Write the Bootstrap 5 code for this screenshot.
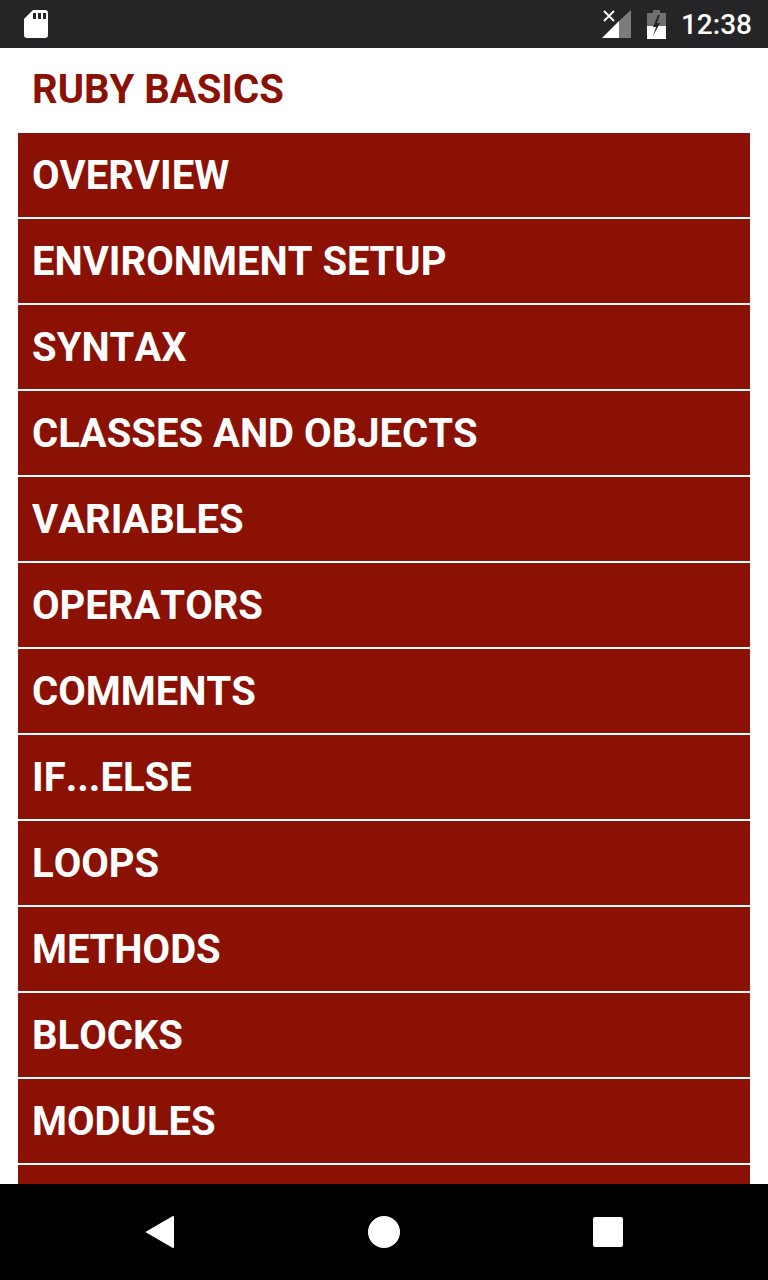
<!DOCTYPE html>
<html lang="en">
<head>
<meta charset="utf-8">
<title>Ruby Basics</title>
<link rel="stylesheet" href="https://cdn.jsdelivr.net/npm/bootstrap@5.3.0/dist/css/bootstrap.min.css">
<style>
html,body{height:1280px;overflow:hidden;background:#fff;}
body{font-family:Roboto,"Liberation Sans",sans-serif;font-kerning:none;}
.phone-shell{height:1280px;}
.status-strip{height:48px;background:#252427;color:#fff;padding:0 16px 0 24px;flex:none;}
.status-clock{font-size:28px;line-height:1;font-weight:500;margin-left:15px;padding-top:2px;}
.screen-body{min-height:0;overflow:hidden;}
.page-heading{height:85px;margin:0;padding:0 0 2px 32px;font-size:40px;font-weight:700;color:#8a1103;line-height:1;}
.topic-list{padding:0 18px;gap:2px;}
.topic-row{flex:0 0 84px;background:#8a1103;color:#fff;font-size:40px;font-weight:700;line-height:1;padding:2px 0 0 14px;border:0;border-radius:0;}
.nav-strip{height:96px;background:#000;flex:none;}
.nav-row{padding:0 144px;}
.nav-slot{width:32px;height:32px;}
</style>
</head>
<body>
<div class="phone-shell d-flex flex-column">
  <div class="status-strip d-flex align-items-center">
    <svg width="24" height="28" viewBox="0 0 24 28"><path fill="#fff" d="M9 0H21a3 3 0 0 1 3 3V25a3 3 0 0 1-3 3H3a3 3 0 0 1-3-3V9Z"/><rect x="9" y="3" width="3" height="6" fill="#252427"/><rect x="14" y="3" width="3" height="6" fill="#252427"/><rect x="19" y="3" width="3" height="6" fill="#252427"/></svg>
    <div class="ms-auto d-flex align-items-center">
      <svg width="29" height="30" viewBox="0 0 29 30" class="me-3"><path fill="#7c7b7d" d="M29 1V29H17V12Z"/><path fill="#fff" d="M0 29 17 12V29Z"/><path stroke="#fff" stroke-width="1.8" fill="none" d="M2 2 12 12M12 2 2 12"/></svg>
      <svg width="19" height="29" viewBox="0 0 19 29"><path fill="#6f6e70" d="M6 0h7v3h6v13H0V3h6Z"/><rect y="16" width="19" height="13" fill="#fff"/><path fill="#252427" d="M11 5 6 17h3l-3 9 7-13h-3l3-8Z"/></svg>
      <span class="status-clock">12:38</span>
    </div>
  </div>
  <main class="screen-body flex-grow-1 d-flex flex-column">
    <h1 class="page-heading d-flex align-items-center flex-shrink-0">RUBY BASICS</h1>
    <div class="topic-list d-flex flex-column">
      <div class="topic-row d-flex align-items-center">OVERVIEW</div>
      <div class="topic-row d-flex align-items-center">ENVIRONMENT SETUP</div>
      <div class="topic-row d-flex align-items-center">SYNTAX</div>
      <div class="topic-row d-flex align-items-center">CLASSES AND OBJECTS</div>
      <div class="topic-row d-flex align-items-center">VARIABLES</div>
      <div class="topic-row d-flex align-items-center">OPERATORS</div>
      <div class="topic-row d-flex align-items-center">COMMENTS</div>
      <div class="topic-row d-flex align-items-center">IF...ELSE</div>
      <div class="topic-row d-flex align-items-center">LOOPS</div>
      <div class="topic-row d-flex align-items-center">METHODS</div>
      <div class="topic-row d-flex align-items-center">BLOCKS</div>
      <div class="topic-row d-flex align-items-center">MODULES</div>
      <div class="topic-row d-flex align-items-center"></div>
    </div>
  </main>
  <div class="nav-strip d-flex align-items-center">
    <div class="d-flex w-100 justify-content-between nav-row">
      <svg class="nav-slot" viewBox="0 0 32 32"><path fill="#fff" stroke="#fff" stroke-width="2" stroke-linejoin="round" d="M29 1V31L3 16Z"/></svg>
      <svg class="nav-slot" viewBox="0 0 32 32"><circle cx="16" cy="16" r="16" fill="#fff"/></svg>
      <svg class="nav-slot" viewBox="0 0 32 32"><rect x="1" y="1" width="30" height="30" rx="2" fill="#fff"/></svg>
    </div>
  </div>
</div>
<script src="https://cdn.jsdelivr.net/npm/bootstrap@5.3.0/dist/js/bootstrap.bundle.min.js"></script>
</body>
</html>
